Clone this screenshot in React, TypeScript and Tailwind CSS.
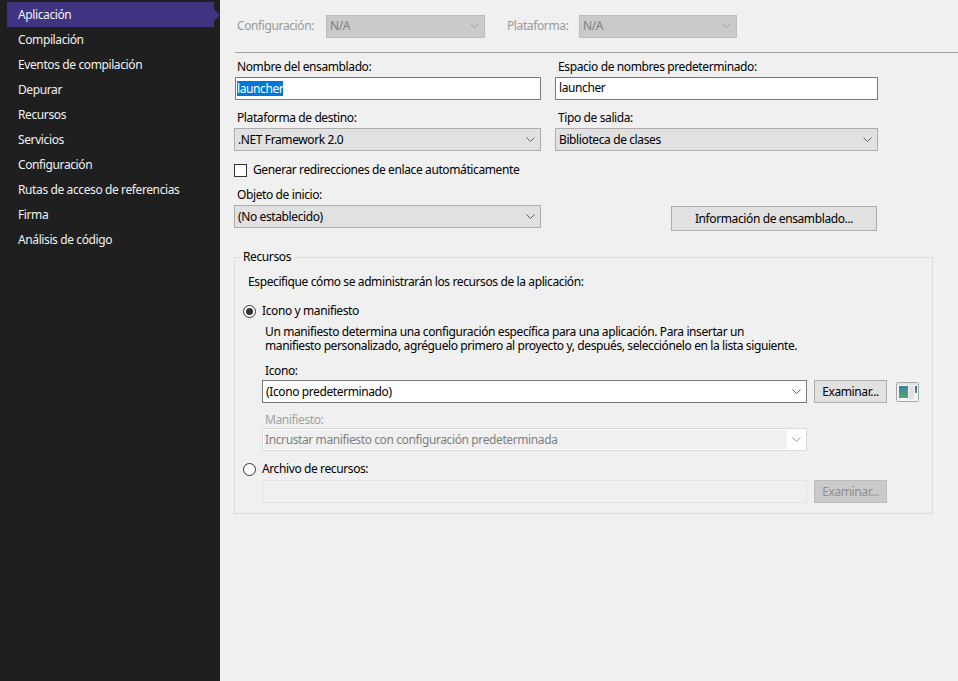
const NAV_ITEMS = [
  'Aplicación',
  'Compilación',
  'Eventos de compilación',
  'Depurar',
  'Recursos',
  'Servicios',
  'Configuración',
  'Rutas de acceso de referencias',
  'Firma',
  'Análisis de código',
];

function Chevron({ color = '#606060' }: { color?: string }) {
  return (
    <svg width="9" height="5" viewBox="0 0 9 5" fill="none" className="shrink-0">
      <path d="M0.5 0.5 L4.5 4.5 L8.5 0.5" stroke={color} strokeWidth="1" />
    </svg>
  );
}

function ComboBox({ value, className }: { value: string; className: string }) {
  return (
    <div className={`flex h-[23px] items-center justify-between border border-[#adadad] bg-[#e1e1e1] pl-[3px] pr-[5px] text-black ${className}`}>
      <span>{value}</span>
      <Chevron />
    </div>
  );
}

function Radio({ checked }: { checked?: boolean }) {
  return (
    <span className="mt-[2px] flex h-[13px] w-[13px] shrink-0 items-center justify-center rounded-full border border-[#333] bg-white">
      {checked && <span className="h-[7px] w-[7px] rounded-full bg-[#333]" />}
    </span>
  );
}

function AppIcon() {
  return (
    <svg width="23" height="20" viewBox="0 0 23 20" className="ml-[9px] mt-[2px] shrink-0">
      <defs>
        <linearGradient id="app-icon-fill" x1="0" y1="0" x2="0" y2="1">
          <stop offset="0" stopColor="#3f7fa8" />
          <stop offset="1" stopColor="#5aa56a" />
        </linearGradient>
        <linearGradient id="app-icon-mark" x1="0" y1="0" x2="0" y2="1">
          <stop offset="0" stopColor="#2b6ea8" />
          <stop offset="1" stopColor="#4d9a66" />
        </linearGradient>
      </defs>
      <rect x="0.5" y="0.5" width="22" height="19" rx="1" fill="#f4f4f4" stroke="#a9a9a9" />
      <rect x="1" y="1" width="21" height="2" fill="#e2e2e2" />
      <rect x="3" y="4" width="9" height="12" fill="url(#app-icon-fill)" />
      <rect x="13" y="4" width="5" height="13" fill="#e0e0e0" />
      <rect x="19" y="4" width="2" height="7" fill="url(#app-icon-mark)" />
    </svg>
  );
}

export default function App() {
  return (
    <div className="flex h-[681px] w-[958px] overflow-hidden bg-[#f0f0f0] font-['Noto_Sans',sans-serif] text-[12px] leading-[16px] tracking-[-0.39px] text-black">
      <aside className="h-full w-[220px] shrink-0 bg-[#1f1f1f] pt-[2px] text-[#f1f1f1]">
        {NAV_ITEMS.map((item, i) => (
          <div key={item} className="relative flex h-[25px] items-center pl-[18px]">
            {i === 0 && (
              <>
                <div className="absolute left-[7px] top-0 h-[25px] w-[207px] bg-[#3f3481]" />
                <div className="absolute left-[214px] top-[7px] h-0 w-0 border-y-[6px] border-l-[6px] border-y-transparent border-l-[#3f3481]" />
              </>
            )}
            <span className="relative">{item}</span>
          </div>
        ))}
      </aside>

      <main className="flex-1">
        <div className="flex items-center pl-[17px] pt-[15px] text-[#9a9a9a]">
          <span className="w-[89px] pb-[2px]">Configuración:</span>
          <div className="flex h-[23px] w-[159px] items-center justify-between border border-[#bdbdbd] bg-[#cacaca] pb-[2px] pl-[3px] pr-[5px] text-[#7f7f7f]">
            <span>N/A</span>
            <Chevron color="#a0a0a0" />
          </div>
          <span className="ml-[22px] w-[72px] pb-[2px]">Plataforma:</span>
          <div className="flex h-[23px] w-[158px] items-center justify-between border border-[#bdbdbd] bg-[#cacaca] pb-[2px] pl-[3px] pr-[5px] text-[#7f7f7f]">
            <span>N/A</span>
            <Chevron color="#a0a0a0" />
          </div>
        </div>

        <div className="ml-[15px] mt-[14px] h-px bg-[#a0a0a0]" />

        <div className="ml-[15px] mt-[6px] flex gap-[14px]">
          <div className="w-[306px]">
            <div className="pl-[2px]">Nombre del ensamblado:</div>
            <div className="mt-[2px] flex h-[23px] items-center border border-[#7a7a7a] bg-white pl-px">
              <span className="mb-px h-[15px] bg-[#0078d7] leading-[15px] text-white">launcher</span>
            </div>
          </div>
          <div className="w-[323px]">
            <div className="pl-[3px]">Espacio de nombres predeterminado:</div>
            <div className="mt-[2px] flex h-[23px] items-center border border-[#7a7a7a] bg-white pb-[2px] pl-[3px]">launcher</div>
          </div>
        </div>

        <div className="ml-[14px] mt-[10px] flex gap-[14px]">
          <div className="w-[307px]">
            <div className="pl-[3px]">Plataforma de destino:</div>
            <ComboBox value=".NET Framework 2.0" className="mt-[2px] w-full" />
          </div>
          <div className="w-[323px]">
            <div className="pl-[3px]">Tipo de salida:</div>
            <ComboBox value="Biblioteca de clases" className="mt-[2px] w-full" />
          </div>
        </div>

        <div className="ml-[14px] mt-[11px] flex items-start gap-[6px]">
          <span className="mt-[2px] h-[13px] w-[13px] border border-[#333] bg-white" />
          <span>Generar redirecciones de enlace automáticamente</span>
        </div>

        <div className="ml-[14px] mt-[9px] flex items-end">
          <div className="w-[307px]">
            <div className="pl-[3px]">Objeto de inicio:</div>
            <ComboBox value="(No establecido)" className="mt-[2px] w-full" />
          </div>
          <div className="ml-[130px] flex h-[25px] w-[206px] translate-y-[3px] items-center justify-center border border-[#adadad] bg-[#e1e1e1]">
            Información de ensamblado...
          </div>
        </div>

        <section className="relative ml-[14px] mt-[29px] h-[257px] w-[699px] border border-[#dcdcdc] pl-[8px]">
          <div className="absolute left-[5px] top-[-9px] bg-[#f0f0f0] px-[3px]">Recursos</div>
          <div className="pl-[5px] pt-[16px]">Especifique cómo se administrarán los recursos de la aplicación:</div>

          <div className="mt-[13px] flex items-start gap-[6px]">
            <Radio checked />
            <span>Icono y manifiesto</span>
          </div>
          <div className="ml-[22px] mt-[6px] leading-[14px]">
            Un manifiesto determina una configuración específica para una aplicación. Para insertar un
            <br />
            manifiesto personalizado, agréguelo primero al proyecto y, después, selecciónelo en la lista siguiente.
          </div>

          <div className="ml-[19px] mt-[10px]">
            <div className="pl-[3px]">Icono:</div>
            <div className="mt-px flex">
              <div className="flex h-[23px] w-[545px] items-center justify-between border border-[#7a7a7a] bg-white pl-[3px] pr-[5px]">
                <span>(Icono predeterminado)</span>
                <Chevron />
              </div>
              <div className="ml-[7px] flex h-[23px] w-[73px] items-center justify-center border border-[#adadad] bg-[#e1e1e1]">Examinar...</div>
              <AppIcon />
            </div>

            <div className="mt-[9px] pl-[3px] text-[#a0a0a0]">Manifiesto:</div>
            <div className="flex h-[23px] w-[545px] items-center justify-between border border-[#d9d9d9] bg-white pl-px pr-[5px] text-[#7f7f7f]">
              <span className="flex h-[19px] w-[523px] items-center bg-[#f0f0f0] pl-px">Incrustar manifiesto con configuración predeterminada</span>
              <Chevron color="#a0a0a0" />
            </div>
          </div>

          <div className="mt-[10px] flex items-start gap-[6px]">
            <Radio />
            <span>Archivo de recursos:</span>
          </div>
          <div className="ml-[19px] mt-[3px] flex">
            <div className="h-[23px] w-[545px] border border-[#e4e4e4] bg-[#f0f0f0]" />
            <div className="ml-[7px] flex h-[23px] w-[73px] items-center justify-center border border-[#bdbdbd] bg-[#cacaca] text-[#8f8f8f]">Examinar...</div>
          </div>
        </section>
      </main>
    </div>
  );
}
